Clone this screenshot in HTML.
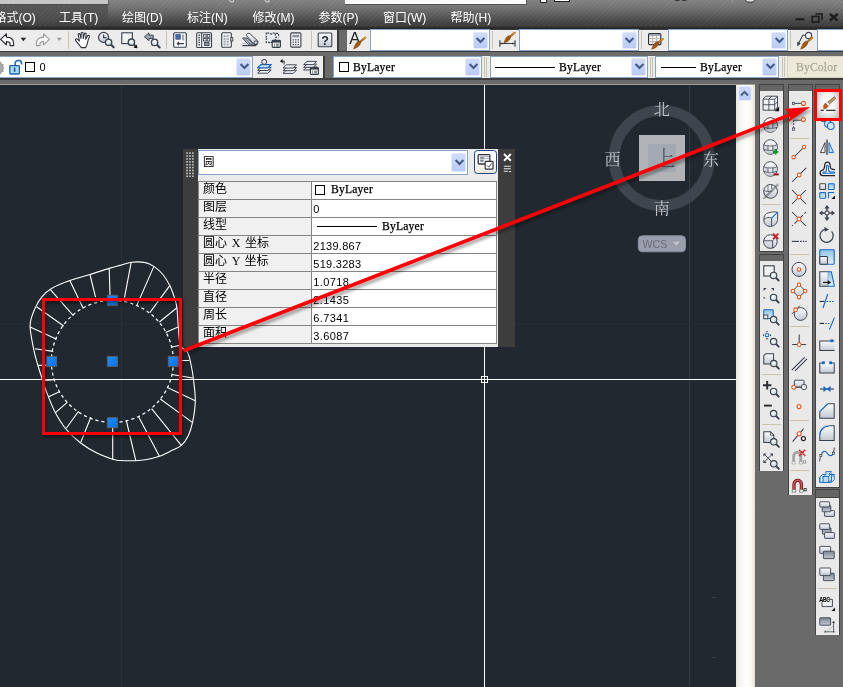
<!DOCTYPE html><html><head><meta charset="utf-8"><title>AutoCAD</title><style>
html,body{margin:0;padding:0}
body{will-change:transform;width:843px;height:687px;overflow:hidden;position:relative;background:#6a6a6a;font-family:"Liberation Sans","Noto Sans CJK SC",sans-serif;font-size:12px}
.a{position:absolute}
svg{overflow:visible}
.menu{color:#fff;font-weight:400;font-size:12px;line-height:14px;top:10.5px;white-space:nowrap;letter-spacing:0}
.tb{background:#ececec}
.combo{background:#fff;border:1px solid #86a4c8;box-sizing:border-box}
.cbtn{background:linear-gradient(#cfdcfb,#b9cbf6);border:1px solid #dfe8fd;box-sizing:border-box;border-radius:2px}
.sep{background:#c9c3a8;width:1px}
.hsep{background:#c9c3a8;height:1px}
.song{font-family:"Liberation Serif","Noto Serif CJK SC",serif;font-size:11.6px;color:#000;white-space:nowrap;line-height:12px}
.song{-webkit-text-stroke:0.25px currentColor;letter-spacing:0.2px}
.mono{font-family:"Liberation Sans","Noto Sans CJK SC",sans-serif;font-size:11px;letter-spacing:-0.12px;color:#000;white-space:nowrap;line-height:12px}
.lab{word-spacing:1.65px}
.lab{font-family:"Liberation Serif","Noto Sans CJK SC",sans-serif;font-size:12px;color:#000;white-space:nowrap;line-height:12px}
.pbody{background:#e9e9e9}
</style></head><body>
<svg class="a" width="0" height="0" style="left:0;top:0"><defs>
<linearGradient id="gf" x1="0" y1="0" x2="0" y2="1"><stop offset="0" stop-color="#fbfcfd"/><stop offset="1" stop-color="#c3c8d2"/></linearGradient>
<linearGradient id="gd" x1="0" y1="0" x2="0" y2="1"><stop offset="0" stop-color="#7d8594"/><stop offset="1" stop-color="#c4c9d2"/></linearGradient>
<linearGradient id="gb" x1="0" y1="0" x2="0" y2="1"><stop offset="0" stop-color="#8fc4e6"/><stop offset="1" stop-color="#e4f1f8"/></linearGradient>
<linearGradient id="gg" x1="0" y1="0" x2="1" y2="1"><stop offset="0" stop-color="#1a8cff"/><stop offset="1" stop-color="#0874ea"/></linearGradient>
<radialGradient id="gl" cx="0.45" cy="0.4" r="0.6"><stop offset="0" stop-color="#ffffff"/><stop offset="1" stop-color="#b9cfd6"/></radialGradient>
<linearGradient id="gbr" x1="0" y1="1" x2="1" y2="0"><stop offset="0" stop-color="#7a3a10"/><stop offset="0.5" stop-color="#c87428"/><stop offset="1" stop-color="#8a4a18"/></linearGradient>
</defs></svg>
<div class="a " style="left:0px;top:0px;width:843px;height:29px;background:linear-gradient(#5a5a5a 0px,#565656 6px,#515151 13px,#494949 20px,#3d3d3d 26px,#2b2b2b 27.3px,#2b2b2b 28.6px,#555 29px)"></div>
<div class="a " style="left:108px;top:0px;width:735px;height:22px;background:linear-gradient(rgba(255,255,255,0.24) 0px,rgba(255,255,255,0.17) 8px,rgba(255,255,255,0.06) 16px,rgba(255,255,255,0) 22px)"></div>
<div class="a " style="left:0px;top:0px;width:843px;height:27px;background:repeating-linear-gradient(135deg,rgba(255,255,255,0) 0px,rgba(255,255,255,0) 2.6px,rgba(255,255,255,0.04) 2.6px,rgba(255,255,255,0.04) 3.6px)"></div>
<div class="a " style="left:0px;top:0px;width:108px;height:3.7px;background:#c6c6c6;border-right:1px solid #666;border-bottom:1.2px solid #4c4c4c"></div>
<div class="a " style="left:345px;top:0px;width:181px;height:3.6px;background:#fafafa;border-right:1px solid #555;border-bottom:1px solid #555"></div>
<div class="a " style="left:540px;top:0px;width:5px;height:1.6px;background:#fff;border:1px solid #222;border-top:0"></div>
<div class="a " style="left:553.5px;top:0px;width:14px;height:1.4px;background:#fff;border:1px solid #222;border-top:0"></div>
<div class="a menu" style="left:-5.5px">格式(O)</div>
<div class="a menu" style="left:59px">工具(T)</div>
<div class="a menu" style="left:122px">绘图(D)</div>
<div class="a menu" style="left:187px">标注(N)</div>
<div class="a menu" style="left:252.5px">修改(M)</div>
<div class="a menu" style="left:318.5px">参数(P)</div>
<div class="a menu" style="left:383px">窗口(W)</div>
<div class="a menu" style="left:450.5px">帮助(H)</div>
<svg class="a" style="left:0;top:0" width="843" height="5" viewBox="0 0 843 5"><path d="M229.5 0c0.4 1.6 2 2.2 4 1.6V0M265 0c0.4 1.6 2 2.2 4 1.6V0" fill="none" stroke="#c8c8c8" stroke-width="1.2"/><path d="M675 0.3h4.5M682 0.3h4.5" stroke="#3a3a3a" stroke-width="1.4"/><path d="M745.5 0a4.5 2.2 0 0 0 9 0" fill="#ddd" stroke="#333" stroke-width="1"/><path d="M732.5 0v3" stroke="#999" stroke-width="1"/></svg>
<svg class="a" style="left:790px;top:8px" width="53" height="20" viewBox="790 8 53 20"><g stroke="#1c1c1c" fill="none"><path d="M795.5 19.3h9" stroke-width="2.2"/><path d="M815.5 14h6.5v6" stroke-width="1.6"/><rect x="812.2" y="16.4" width="6.6" height="5.6" stroke-width="1.6"/><path d="M830 14l7.6 6.6M837.6 14l-7.6 6.6" stroke-width="2.4"/></g></svg>
<div class="a " style="left:0px;top:29px;width:843px;height:56px;background:#3a3a3a"></div>
<div class="a " style="left:0px;top:52.3px;width:843px;height:3.4px;background:#6b6b6b"></div>
<div class="a tb" style="left:0px;top:29.5px;width:336.5px;height:21px;"></div>
<div class="a " style="left:339px;top:29.5px;width:7.5px;height:21px;background:#6a6a6a"></div>
<div class="a tb" style="left:346.5px;top:29.5px;width:496.5px;height:21px;"></div>
<div class="a sep" style="left:68px;top:31px;width:1px;height:18px;"></div>
<div class="a sep" style="left:166px;top:31px;width:1px;height:18px;"></div>
<div class="a sep" style="left:310.5px;top:31px;width:1px;height:18px;"></div>
<div class="a sep" style="left:492px;top:31px;width:1px;height:18px;"></div>
<div class="a sep" style="left:641px;top:31px;width:1px;height:18px;"></div>
<div class="a sep" style="left:790px;top:31px;width:1px;height:18px;"></div>
<svg class="a" style="left:-2.5px;top:32px" width="16" height="16" viewBox="0 0 16 16"><path d="M2.6 7.4L8.4 1.9V5.1C13 5.1 15.6 7.6 15.6 11.4V13.6H12V11.6C12 10.1 10.6 9.6 8.4 9.6V12.8Z" fill="#fff" stroke="#2c2f36" stroke-width="1.2" stroke-linejoin="round"/></svg>
<svg class="a" style="left:33.5px;top:32px" width="16" height="16" viewBox="0 0 16 16"><path d="M15.4 7.4L9.6 1.9V5.1C5 5.1 2.4 7.6 2.4 11.4V13.6H6V11.6C6 10.1 7.4 9.6 9.6 9.6V12.8Z" fill="#f6f6f6" stroke="#9b9b9b" stroke-width="1.1" stroke-linejoin="round"/></svg>
<svg class="a" style="left:75px;top:32px" width="16" height="16" viewBox="0 0 16 16"><path d="M6.4 15.6L0.5 8.3C0 7.1 1.2 6.4 2.2 7.2L4.5 9L3.2 2.7C3 1.3 4.6 0.9 5 2.3L6 6.6L6.2 1.3C6.3 -0.1 8 -0.1 8.1 1.3L8.3 6.6L9.4 1.9C9.8 0.5 11.4 1 11.2 2.4L10.6 7.2L12.6 3.9C13.4 2.7 14.9 3.6 14.3 4.9C13.4 7.1 12.6 9.5 12.4 11.1C12.2 12.9 11.4 14.3 10.6 15.6Z" fill="#fff" stroke="#2c2f36" stroke-width="1.05" stroke-linejoin="round"/></svg>
<svg class="a" style="left:98px;top:32px" width="16" height="16" viewBox="0 0 16 16"><circle cx="5.6" cy="5.4" r="5" fill="url(#gf)" stroke="#3a414e" stroke-width="1.2"/><path d="M5.6 2.4V5.7H8.5" fill="none" stroke="#3a414e" stroke-width="1.2"/><path d="M13.16 12.86l2.50 2.50" stroke="#3a414e" stroke-width="2.1" stroke-linecap="round"/><circle cx="10.6" cy="10.3" r="3.2" fill="url(#gl)" stroke="#3a414e" stroke-width="1.3"/></svg>
<svg class="a" style="left:121px;top:32px" width="16" height="16" viewBox="0 0 16 16"><rect x="0.8" y="0.8" width="10.6" height="10.8" fill="#f3f3f3" stroke="#3a414e" stroke-width="1.1"/><path d="M12.96 12.76l2.50 2.50" stroke="#3a414e" stroke-width="2.1" stroke-linecap="round"/><circle cx="10.4" cy="10.2" r="3.2" fill="url(#gl)" stroke="#3a414e" stroke-width="1.3"/><path d="M16 12.6V16H12.6Z" fill="#111"/></svg>
<svg class="a" style="left:144px;top:32px" width="16" height="16" viewBox="0 0 16 16"><path d="M0.4 4.8L5 0.9V3.2H9.2V6.4H5V8.7Z" fill="#9aa7b8" stroke="#3a414e" stroke-width="1"/><path d="M13.16 12.96l2.50 2.50" stroke="#3a414e" stroke-width="2.1" stroke-linecap="round"/><circle cx="10.6" cy="10.4" r="3.2" fill="url(#gl)" stroke="#3a414e" stroke-width="1.3"/></svg>
<svg class="a" style="left:173px;top:32px" width="16" height="16" viewBox="0 0 16 16"><rect x="0.7" y="0.7" width="12.6" height="14.6" rx="1" fill="#fbfbfb" stroke="#3a414e" stroke-width="1.1"/><rect x="2.8" y="2.6" width="4.6" height="4.6" fill="#3f6db0" stroke="#1d3f78" stroke-width="0.6"/><rect x="9" y="2.4" width="2.2" height="6" fill="#a9adb5"/><path d="M4 11.6h7M4 11.6l2-1.6M4 11.6l2 1.6" stroke="#3a414e" stroke-width="1.1" fill="none"/></svg>
<svg class="a" style="left:196px;top:32px" width="16" height="16" viewBox="0 0 16 16"><rect x="0.7" y="0.7" width="14.8" height="14.8" rx="1" fill="#f5f5f5" stroke="#3a414e" stroke-width="1.1"/><path d="M5.7 0.7V15.5" stroke="#3a414e" stroke-width="1.05"/><rect x="2.4" y="2.6" width="1.6" height="1.3" fill="#3a414e"/><rect x="2.4" y="5" width="1.6" height="1.3" fill="#3a414e"/><rect x="2.4" y="7.4" width="1.6" height="1.3" fill="#3a414e"/><rect x="2.4" y="9.8" width="1.6" height="1.3" fill="#3a414e"/><rect x="2.4" y="12.2" width="1.6" height="1.3" fill="#3a414e"/><rect x="7.6" y="2.6" width="2.6" height="2.6" fill="#fff" stroke="#3a414e" stroke-width="0.9"/><rect x="7.6" y="6.4" width="2.6" height="2.6" fill="#fff" stroke="#3a414e" stroke-width="0.9"/><rect x="11.2" y="2.6" width="2.6" height="2.6" fill="#fff" stroke="#3a414e" stroke-width="0.9"/><rect x="11.2" y="6.4" width="2.6" height="2.6" fill="#fff" stroke="#3a414e" stroke-width="0.9"/><rect x="8.6" y="10.4" width="4.4" height="3.2" fill="#8e96a4" stroke="#3a414e" stroke-width="0.9"/></svg>
<svg class="a" style="left:219px;top:32px" width="16" height="16" viewBox="0 0 16 16"><rect x="2.7" y="0.7" width="9.6" height="14.6" rx="1" fill="#f2f2f2" stroke="#3a414e" stroke-width="1.1"/><rect x="11.8" y="5.6" width="2" height="3.4" fill="#ddd" stroke="#3a414e" stroke-width="0.9"/><rect x="4.6" y="3" width="2" height="2" fill="#a3a7ae"/><rect x="4.6" y="5.8" width="2" height="2" fill="#a3a7ae"/><rect x="4.6" y="8.6" width="2" height="2" fill="#a3a7ae"/><rect x="4.6" y="11.4" width="2" height="2" fill="#a3a7ae"/><rect x="7.6" y="3" width="2" height="2" fill="#a3a7ae"/><rect x="7.6" y="5.8" width="2" height="2" fill="#a3a7ae"/><rect x="7.6" y="8.6" width="2" height="2" fill="#a3a7ae"/><rect x="7.6" y="11.4" width="2" height="2" fill="#a3a7ae"/></svg>
<svg class="a" style="left:242px;top:32px" width="16" height="16" viewBox="0 0 16 16"><path d="M0.4 6H5L11.8 12.2H6Z" fill="#dde1e8" stroke="#3a414e" stroke-width="0.9" stroke-linejoin="round"/><path d="M1.8 6.4L8 12M3.4 6.2L9.6 12" stroke="#3a414e" stroke-width="0.7"/><path d="M4.4 3.4C4.6 1.6 6.6 0.8 7.8 1.6L15.6 8.8C16.4 10.2 16 11.8 14.6 12.2L12 12.4Z" fill="url(#gf)" stroke="#3a414e" stroke-width="1" stroke-linejoin="round"/><circle cx="13.8" cy="10.6" r="1.8" fill="#c9ced8" stroke="#3a414e" stroke-width="0.9"/><path d="M0.4 13.7H13.2L15.4 12.2" fill="none" stroke="#3a414e" stroke-width="1.2"/><path d="M0.6 11.6H5" stroke="#b8bcc4" stroke-width="1.4"/></svg>
<svg class="a" style="left:265px;top:32px" width="16" height="16" viewBox="0 0 16 16"><path d="M2.2 1.2h3l1 0.9 1-0.9h3.2v3l0.9 1-0.9 1v4.2H6.2l-1 0.9-1-0.9H1.2V7.4l0.9-1-0.9-1V1.2Z" fill="#e6e9ee" stroke="#3a414e" stroke-width="1.2" stroke-dasharray="2 1.1"/><path d="M11 1.4h2.6v4" fill="none" stroke="#3a414e" stroke-width="1.1" stroke-dasharray="2 1.1"/><rect x="7.2" y="8.4" width="8.2" height="7" rx="0.8" fill="#f4f4f4" stroke="#3a414e" stroke-width="1.2"/><rect x="7.2" y="8.4" width="8.2" height="2.2" fill="#3a414e"/><path d="M9 12.2h1M11 12.2h3M9 14h1M11 14h3" stroke="#3a414e" stroke-width="0.9"/></svg>
<svg class="a" style="left:288px;top:32px" width="16" height="16" viewBox="0 0 16 16"><rect x="2.7" y="0.9" width="10.2" height="14.2" rx="1.2" fill="#f7f7f7" stroke="#3a414e" stroke-width="1.1"/><rect x="4.4" y="2.8" width="6.8" height="2.6" fill="#8d95a3"/><rect x="4.6" y="7.2" width="1.3" height="1.3" fill="#3a414e"/><rect x="4.6" y="9.6" width="1.3" height="1.3" fill="#3a414e"/><rect x="4.6" y="12" width="1.3" height="1.3" fill="#3a414e"/><rect x="7.1" y="7.2" width="1.3" height="1.3" fill="#3a414e"/><rect x="7.1" y="9.6" width="1.3" height="1.3" fill="#3a414e"/><rect x="7.1" y="12" width="1.3" height="1.3" fill="#3a414e"/><rect x="9.6" y="7.2" width="1.3" height="1.3" fill="#3a414e"/><rect x="9.6" y="9.6" width="1.3" height="1.3" fill="#3a414e"/><rect x="9.6" y="12" width="1.3" height="1.3" fill="#3a414e"/></svg>
<svg class="a" style="left:317px;top:32px" width="16" height="16" viewBox="0 0 16 16"><rect x="1.2" y="1" width="13.6" height="13.8" rx="1" fill="url(#gf)" stroke="#3a414e" stroke-width="1.1"/><text x="8" y="12.6" text-anchor="middle" font-family="Liberation Sans,sans-serif" font-weight="bold" font-size="12.5" fill="#1e2430">?</text></svg>
<svg class="a" style="left:20px;top:37px" width="45" height="6" viewBox="20 37 45 6"><path d="M20.6 37.8h5.6l-2.8 3.4z" fill="#222"/><path d="M56.6 37.8h5.4l-2.7 3.3z" fill="#a0a0a0"/></svg>
<svg class="a" style="left:350px;top:32px" width="16" height="16" viewBox="0 0 16 16"><text x="-0.7" y="12.1" font-family="Liberation Sans,sans-serif" font-size="16.6" fill="#22262e">A</text><path d="M10.20 9.68 L15.38 5.50" stroke="#7a3c08" stroke-width="1.9" stroke-linecap="round" stroke-dasharray="1.1 0.5"/><path d="M10.20 9.68 L14.75 6.00" stroke="#f6c060" stroke-width="0.7"/><path d="M14.13 6.51 L15.38 5.50" stroke="#f4a010" stroke-width="1.3" stroke-linecap="round"/><path d="M3.57 16.94 C6.28 16.18 11.04 13.63 10.71 9.52 C7.93 7.66 5.32 11.55 3.57 16.94 Z" fill="#a2570f" stroke="#7c3f0a" stroke-width="0.5"/></svg>
<div class="a combo" style="left:370px;top:29px;width:119.5px;height:22px;"></div><div class="a cbtn" style="left:472.5px;top:31.5px;width:15px;height:17px;"><svg class="a" style="left:2.5px;top:4px" width="9" height="7" viewBox="0 0 9 7"><path d="M0.6 1.1l3.9 4 3.9-4" fill="none" stroke="#425a8c" stroke-width="2.1"/></svg></div>
<svg class="a" style="left:498.5px;top:32px" width="16" height="16" viewBox="0 0 16 16"><path d="M0.9 8.2V14.8M16 8.2V14.8M0.9 11.5H16" stroke="#3a414e" stroke-width="1.2" fill="none"/><path d="M1.2 11.5l2.2-1.3v2.6zM15.7 11.5l-2.2-1.3v2.6z" fill="#3a414e"/><path d="M11.05 4.43 L15.87 0.69" stroke="#7a3c08" stroke-width="1.9" stroke-linecap="round" stroke-dasharray="1.1 0.5"/><path d="M11.05 4.43 L15.24 1.18" stroke="#f6c060" stroke-width="0.7"/><path d="M14.60 1.67 L15.87 0.69" stroke="#f4a010" stroke-width="1.3" stroke-linecap="round"/><path d="M4.85 11.15 C7.45 10.53 11.93 8.31 11.54 4.31 C8.85 2.34 6.44 5.99 4.85 11.15 Z" fill="#a2570f" stroke="#7c3f0a" stroke-width="0.5"/></svg>
<div class="a combo" style="left:518.5px;top:29px;width:120px;height:22px;"></div><div class="a cbtn" style="left:621.5px;top:31.5px;width:15px;height:17px;"><svg class="a" style="left:2.5px;top:4px" width="9" height="7" viewBox="0 0 9 7"><path d="M0.6 1.1l3.9 4 3.9-4" fill="none" stroke="#425a8c" stroke-width="2.1"/></svg></div>
<svg class="a" style="left:648px;top:32px" width="16" height="16" viewBox="0 0 16 16"><rect x="0.6" y="1.7" width="12.2" height="11" rx="1" fill="#fbfbfb" stroke="#2e323a" stroke-width="1.2"/><rect x="1.2" y="2.3" width="11" height="1.5" fill="#8d95ab"/><path d="M1.2 6.6h11M1.2 9.6h11M4.6 4v8.4M8.6 4v8.4" stroke="#b4b4b4" stroke-width="1"/><path d="M10.12 10.54 L15.06 6.88" stroke="#7a3c08" stroke-width="1.9" stroke-linecap="round" stroke-dasharray="1.1 0.5"/><path d="M10.12 10.54 L14.42 7.35" stroke="#f6c060" stroke-width="0.7"/><path d="M13.77 7.83 L15.06 6.88" stroke="#f4a010" stroke-width="1.3" stroke-linecap="round"/><path d="M3.71 17.16 C6.34 16.58 10.90 14.44 10.61 10.42 C7.96 8.41 5.45 12.02 3.71 17.16 Z" fill="#a2570f" stroke="#7c3f0a" stroke-width="0.5"/></svg>
<div class="a combo" style="left:668px;top:29px;width:120px;height:22px;"></div><div class="a cbtn" style="left:771px;top:31.5px;width:15px;height:17px;"><svg class="a" style="left:2.5px;top:4px" width="9" height="7" viewBox="0 0 9 7"><path d="M0.6 1.1l3.9 4 3.9-4" fill="none" stroke="#425a8c" stroke-width="2.1"/></svg></div>
<svg class="a" style="left:797px;top:32px" width="16" height="16" viewBox="0 0 16 16"><circle cx="11.5" cy="3.5" r="3.1" fill="#f3f4f8" stroke="#3a414e" stroke-width="1.1"/><path d="M8.4 3.3H5.7L1.6 11.6" fill="none" stroke="#3a414e" stroke-width="1.1"/><path d="M0.2 14.6l0.1-5 3.4 1.8z" fill="#3a414e"/><path d="M10.24 9.88 L15.38 5.70" stroke="#7a3c08" stroke-width="1.9" stroke-linecap="round" stroke-dasharray="1.1 0.5"/><path d="M10.24 9.88 L14.76 6.21" stroke="#f6c060" stroke-width="0.7"/><path d="M14.14 6.71 L15.38 5.70" stroke="#f4a010" stroke-width="1.3" stroke-linecap="round"/><path d="M3.68 17.14 C6.38 16.37 11.10 13.82 10.75 9.72 C7.96 7.86 5.39 11.76 3.68 17.14 Z" fill="#a2570f" stroke="#7c3f0a" stroke-width="0.5"/></svg>
<div class="a combo" style="left:817px;top:29px;width:40px;height:22px;"></div>
<div class="a tb" style="left:0px;top:55.5px;width:322.5px;height:22.5px;"></div>
<div class="a " style="left:325px;top:55.5px;width:7.5px;height:22.5px;background:#6a6a6a"></div>
<div class="a tb" style="left:332.5px;top:55.5px;width:510.5px;height:22.5px;"></div>
<div class="a combo" style="left:-6px;top:55.5px;width:259px;height:22.5px;"><svg class="a" style="left:3px;top:3px" width="16" height="16" viewBox="0 0 16 16"><path transform="translate(1.2,0)" d="M-2 1.4l1.6 1.4 1.8-1 0.6 2.2 2.2 0.4-0.6 2 1.4 1.6-1.4 1.4 0.6 2-2.2 0.6-0.6 2-1.8-0.8-1.6 1.4Z" fill="#a8a8a8" stroke="#8c8c8c" stroke-width="0.6"/></svg><svg class="a" style="left:14px;top:2px" width="16" height="16" viewBox="0 0 16 16"><path d="M6.2 7V4.2C6.2 0.6 12.4 0.4 12.6 4.2V5.4" fill="none" stroke="#2a6bb8" stroke-width="1.6"/><rect x="0.8" y="6.6" width="9.6" height="8.4" rx="0.8" fill="#a8dcf4" stroke="#1f62b0" stroke-width="1.3"/><path d="M5.6 8.6v4.2" stroke="#1f4f9a" stroke-width="1.6"/></svg><div class="a" style="left:29.8px;top:5.4px;width:8px;height:8px;border:1px solid #000;background:#fff"></div><div class="a mono" style="left:44.6px;top:4px">0</div></div><div class="a cbtn" style="left:236px;top:58px;width:15px;height:17.5px;"><svg class="a" style="left:2.5px;top:4.25px" width="9" height="7" viewBox="0 0 9 7"><path d="M0.6 1.1l3.9 4 3.9-4" fill="none" stroke="#425a8c" stroke-width="2.1"/></svg></div>
<svg class="a" style="left:257px;top:59px" width="16" height="16" viewBox="0 0 16 16"><path d="M0.6 14.2l3.4-3.2h10.2l-3.4 3.2z" fill="#f0f2f6" stroke="#3a414e" stroke-width="0.95" stroke-linejoin="round"/><path d="M0.6 11.5l3.4-3.2h10.2l-3.4 3.2z" fill="#f0f2f6" stroke="#3a414e" stroke-width="0.95" stroke-linejoin="round"/><path d="M0.6 8.8l3.4-3.2h10.2l-3.4 3.2z" fill="#f0f2f6" stroke="#3a414e" stroke-width="0.95" stroke-linejoin="round"/><path d="M0.6 8.8l3.4-3.2h10.2l-3.4 3.2z" fill="#cfe6f8" stroke="#1268c8" stroke-width="1.1" stroke-linejoin="round"/><circle cx="7.2" cy="2.9" r="2.5" fill="#e8eaee" stroke="#3a414e" stroke-width="1"/></svg>
<svg class="a" style="left:280px;top:59px" width="16" height="16" viewBox="0 0 16 16"><path d="M3 14.4l3.4-3.2h10.2l-3.4 3.2z" fill="#f0f2f6" stroke="#3a414e" stroke-width="0.95" stroke-linejoin="round"/><path d="M3 11.7l3.4-3.2h10.2l-3.4 3.2z" fill="#f0f2f6" stroke="#3a414e" stroke-width="0.95" stroke-linejoin="round"/><path d="M3 9l3.4-3.2h10.2l-3.4 3.2z" fill="#f0f2f6" stroke="#3a414e" stroke-width="0.95" stroke-linejoin="round"/><path d="M1 2.2h3.2v3.2" fill="none" stroke="#3a414e" stroke-width="1.1"/><path d="M0 2.2l2.6-2.1v4.2z" fill="#111"/></svg>
<svg class="a" style="left:303px;top:59px" width="16" height="16" viewBox="0 0 16 16"><path d="M0.6 11l3.4-3.2h9.6l-3.4 3.2z" fill="#f0f2f6" stroke="#3a414e" stroke-width="0.95" stroke-linejoin="round"/><path d="M0.6 8.3l3.4-3.2h9.6l-3.4 3.2z" fill="#f0f2f6" stroke="#3a414e" stroke-width="0.95" stroke-linejoin="round"/><path d="M0.6 5.6l3.4-3.2h9.6l-3.4 3.2z" fill="#f0f2f6" stroke="#3a414e" stroke-width="0.95" stroke-linejoin="round"/><rect x="7.4" y="8.6" width="8" height="6.8" rx="0.8" fill="#f4f4f4" stroke="#3a414e" stroke-width="1.2"/><rect x="7.4" y="8.6" width="8" height="2" fill="#3a414e"/><path d="M9 12.2h1M11 12.2h3M9 13.8h1M11 13.8h3" stroke="#3a414e" stroke-width="0.8"/></svg>
<div class="a combo" style="left:332.5px;top:55.5px;width:149.5px;height:22.5px;"><div class="a" style="left:5.5px;top:5.6px;width:8px;height:8px;border:1px solid #000;background:#fff"></div><div class="a song" style="left:19.5px;top:5.2px">ByLayer</div></div><div class="a cbtn" style="left:465px;top:58px;width:15px;height:17.5px;"><svg class="a" style="left:2.5px;top:4.25px" width="9" height="7" viewBox="0 0 9 7"><path d="M0.6 1.1l3.9 4 3.9-4" fill="none" stroke="#425a8c" stroke-width="2.1"/></svg></div>
<div class="a sep" style="left:484px;top:57px;width:1px;height:20px;"></div><div class="a sep" style="left:486px;top:57px;width:1px;height:20px;"></div>
<div class="a combo" style="left:489.5px;top:55.5px;width:158.5px;height:22.5px;"><div class="a" style="left:4px;top:10.5px;width:60px;height:1px;background:#000"></div><div class="a song" style="left:68.5px;top:5.2px">ByLayer</div></div><div class="a cbtn" style="left:631px;top:58px;width:15px;height:17.5px;"><svg class="a" style="left:2.5px;top:4.25px" width="9" height="7" viewBox="0 0 9 7"><path d="M0.6 1.1l3.9 4 3.9-4" fill="none" stroke="#425a8c" stroke-width="2.1"/></svg></div>
<div class="a sep" style="left:649.5px;top:57px;width:1px;height:20px;"></div><div class="a sep" style="left:651.5px;top:57px;width:1px;height:20px;"></div>
<div class="a combo" style="left:654.5px;top:55.5px;width:124.5px;height:22.5px;"><div class="a" style="left:5px;top:10.5px;width:35px;height:1px;background:#000"></div><div class="a song" style="left:44.5px;top:5.2px">ByLayer</div></div><div class="a cbtn" style="left:762px;top:58px;width:15px;height:17.5px;"><svg class="a" style="left:2.5px;top:4.25px" width="9" height="7" viewBox="0 0 9 7"><path d="M0.6 1.1l3.9 4 3.9-4" fill="none" stroke="#425a8c" stroke-width="2.1"/></svg></div>
<div class="a sep" style="left:781.5px;top:57px;width:1px;height:20px;"></div><div class="a sep" style="left:783.5px;top:57px;width:1px;height:20px;"></div>
<div class="a " style="left:787px;top:55.5px;width:60px;height:22.5px;background:#ece9d8;border:1px solid #d8d4c0;box-sizing:border-box"><div class="a song" style="left:8px;top:5.2px;color:#aca899">ByColor</div></div>
<div class="a " style="left:0px;top:78px;width:843px;height:2.4px;background:#3e3e3e"></div>
<div class="a " style="left:0px;top:80.4px;width:843px;height:4.6px;background:#6b6b6b"></div>
<div class="a " style="left:0px;top:84px;width:755px;height:1px;background:#a39f93"></div>
<div class="a " style="left:0px;top:85px;width:735.5px;height:603px;background:#212830"></div>
<div class="a " style="left:121px;top:84.7px;width:1px;height:603px;background:#29303b"></div>
<div class="a " style="left:689px;top:84.7px;width:1px;height:603px;background:#333a48"></div>
<div class="a " style="left:0px;top:323px;width:735.5px;height:1px;background:#262d37"></div>
<div class="a " style="left:0px;top:379px;width:735.5px;height:1px;background:#fdfdfd"></div>
<div class="a " style="left:484px;top:84.7px;width:1px;height:603px;background:#fdfdfd"></div>
<div class="a " style="left:481px;top:376px;width:7px;height:7px;border:1px solid #fff;box-sizing:border-box;background:#212830"></div>
<div class="a " style="left:484px;top:376px;width:1px;height:7px;background:#fff"></div><div class="a " style="left:481px;top:379px;width:7px;height:1px;background:#fff"></div>
<div class="a " style="left:712px;top:597px;width:4px;height:1px;background:#3d444e"></div><div class="a " style="left:712px;top:657px;width:4px;height:1px;background:#3d444e"></div>
<div class="a " style="left:735.5px;top:84.7px;width:19.5px;height:603px;background:linear-gradient(90deg,#e9e6df 0%,#f6f5f0 22%,#fefefc 55%,#f7f6f0 80%,#efede4 90%,#e2dfd2 96%,#e9e7dc 100%)"></div>
<div class="a " style="left:737.5px;top:85.5px;width:14px;height:15.5px;background:linear-gradient(#cdd9fb,#bccdf7);border:1px solid #e6ecfd;border-radius:2.5px;box-sizing:border-box"><svg class="a" style="left:1.5px;top:3px" width="9" height="7" viewBox="0 0 9 7"><path d="M1 5.5l3.5-3.6L8 5.5" fill="none" stroke="#4d6185" stroke-width="2"/></svg></div>
<div class="a " style="left:758.9px;top:83.6px;width:25px;height:168.1px;background:#434343"></div><div class="a " style="left:759.8px;top:84.5px;width:23.2px;height:6.6px;background:#656565"></div><div class="a pbody" style="left:759.8px;top:91.1px;width:23.2px;height:159.7px;"></div>
<div class="a " style="left:758.9px;top:253.7px;width:25px;height:217.8px;background:#434343"></div><div class="a " style="left:759.8px;top:254.6px;width:23.2px;height:6.4px;background:#656565"></div><div class="a pbody" style="left:759.8px;top:261px;width:23.2px;height:209.6px;"></div>
<div class="a " style="left:787.6px;top:83.6px;width:25px;height:411.9px;background:#434343"></div><div class="a " style="left:788.5px;top:84.5px;width:23.2px;height:6.6px;background:#656565"></div><div class="a pbody" style="left:788.5px;top:91.1px;width:23.2px;height:403.5px;"></div>
<div class="a " style="left:815.1px;top:83.6px;width:25px;height:404px;background:#434343"></div><div class="a " style="left:816px;top:84.5px;width:23.2px;height:6.6px;background:#656565"></div><div class="a pbody" style="left:816px;top:91.1px;width:23.2px;height:395.6px;"></div>
<div class="a " style="left:815.1px;top:489.3px;width:25px;height:146.2px;background:#434343"></div><div class="a " style="left:816px;top:490.2px;width:23.2px;height:7.3px;background:#656565"></div><div class="a pbody" style="left:816px;top:497.5px;width:23.2px;height:137.1px;"></div>
<svg class="a" style="left:762.5px;top:95px" width="16" height="16" viewBox="0 0 16 16"><g transform="translate(-0.7,0)"><path d="M0.8 4.2L3.6 1.2H15.2V12L12.4 15.2H0.8Z" fill="#eef1f6" stroke="#3a414e" stroke-width="0.95" stroke-linejoin="round"/><path d="M0.8 4.2H12.4V15.2M12.4 4.2L15.2 1.2M6.6 4.2V15.2M0.8 9.7H12.4M9.4 1.2L6.6 4.2M12.4 9.7L15.2 6.6" fill="none" stroke="#3a414e" stroke-width="0.86"/><path d="M16.8 11.6V16.2H12.2Z" fill="#111"/></g></svg>
<svg class="a" style="left:762.5px;top:117px" width="16" height="16" viewBox="0 0 16 16"><ellipse cx="7.4" cy="8" rx="7" ry="7.3" fill="url(#gf)" stroke="#3a414e" stroke-width="0.95"/><path d="M0.7 5.8C3.4 7.4 11.4 7.4 14.1 5.8V10.2C11.4 11.8 3.4 11.8 0.7 10.2Z" fill="#d2d7df"/><path d="M5 6.9H9.8V11.3H5Z" fill="#e9ecf1"/><path d="M0.6 5.8C3.4 7.4 11.4 7.4 14.2 5.8M0.6 10.2C3.4 11.8 11.4 11.8 14.2 10.2M5 6.9V11.3M9.8 6.9V11.3" fill="none" stroke="#3a414e" stroke-width="0.73"/><path d="M4.6 3.2L7.4 1.4L10.2 3.2Z" fill="#ffffff"/><path d="M2 12.2C4.6 15 10.2 15 12.8 12.2" fill="none" stroke="#c2c7d0" stroke-width="1.03"/></svg>
<svg class="a" style="left:762.5px;top:139px" width="16" height="16" viewBox="0 0 16 16"><ellipse cx="7.4" cy="8" rx="7" ry="7.3" fill="url(#gf)" stroke="#3a414e" stroke-width="0.95"/><path d="M0.7 5.8C3.4 7.4 11.4 7.4 14.1 5.8V10.2C11.4 11.8 3.4 11.8 0.7 10.2Z" fill="#d2d7df"/><path d="M5 6.9H9.8V11.3H5Z" fill="#e9ecf1"/><path d="M0.6 5.8C3.4 7.4 11.4 7.4 14.2 5.8M0.6 10.2C3.4 11.8 11.4 11.8 14.2 10.2M5 6.9V11.3M9.8 6.9V11.3" fill="none" stroke="#3a414e" stroke-width="0.73"/><path d="M4.6 3.2L7.4 1.4L10.2 3.2Z" fill="#ffffff"/><path d="M2 12.2C4.6 15 10.2 15 12.8 12.2" fill="none" stroke="#c2c7d0" stroke-width="1.03"/><path d="M12.6 10.4V15.6M10 13H15.2" stroke="#0a9a12" stroke-width="1.93"/></svg>
<svg class="a" style="left:762.5px;top:161px" width="16" height="16" viewBox="0 0 16 16"><ellipse cx="7.4" cy="8" rx="7" ry="7.3" fill="url(#gf)" stroke="#3a414e" stroke-width="0.95"/><path d="M0.7 5.8C3.4 7.4 11.4 7.4 14.1 5.8V10.2C11.4 11.8 3.4 11.8 0.7 10.2Z" fill="#d2d7df"/><path d="M5 6.9H9.8V11.3H5Z" fill="#e9ecf1"/><path d="M0.6 5.8C3.4 7.4 11.4 7.4 14.2 5.8M0.6 10.2C3.4 11.8 11.4 11.8 14.2 10.2M5 6.9V11.3M9.8 6.9V11.3" fill="none" stroke="#3a414e" stroke-width="0.73"/><path d="M4.6 3.2L7.4 1.4L10.2 3.2Z" fill="#ffffff"/><path d="M2 12.2C4.6 15 10.2 15 12.8 12.2" fill="none" stroke="#c2c7d0" stroke-width="1.03"/><path d="M10.6 13.4H15.8" stroke="#a00d12" stroke-width="2.02"/></svg>
<svg class="a" style="left:762.5px;top:183px" width="16" height="16" viewBox="0 0 16 16"><circle cx="7.6" cy="8.4" r="6.9" fill="url(#gf)" stroke="#3a414e" stroke-width="0.95"/><path d="M0.8 7.4C3 8.8 7 8.8 9 8M5 2.6V8.4M8.6 1.8V6" fill="none" stroke="#3a414e" stroke-width="0.69"/><path d="M0.2 15.4L14.8 0.8M1.6 15.8L15.6 1.8" stroke="#3a414e" stroke-width="0.77"/></svg>
<div class="a hsep" style="left:762px;top:203.5px;width:18.5px;height:1px;"></div>
<svg class="a" style="left:762.5px;top:211px" width="16" height="16" viewBox="0 0 16 16"><path d="M3.4 2.6C7 0.8 12 0.6 14.6 1.2V8.4C14.4 12 12 15 7.6 15.4C3.4 15.6 0.8 12.6 0.8 9C0.8 6 1.8 3.8 3.4 2.6Z" fill="url(#gf)" stroke="#3a414e" stroke-width="0.95"/><path d="M0.9 8.6C3 6.2 6.4 6 8.6 7.2V15.2" fill="none" stroke="#3a414e" stroke-width="0.86"/><path d="M8.6 7.2L14.4 1.4" stroke="#1268c8" stroke-width="1.12"/></svg>
<svg class="a" style="left:762.5px;top:233px" width="16" height="16" viewBox="0 0 16 16"><circle cx="7.4" cy="8.6" r="6.8" fill="url(#gf)" stroke="#3a414e" stroke-width="0.95"/><path d="M0.7 7.8H9.6M9.6 7.8V15M9.6 7.8L12.4 5" fill="none" stroke="#3a414e" stroke-width="0.86"/><path d="M10 0.6L15.4 6M15.4 0.6L10 6" stroke="#d8161c" stroke-width="1.75"/></svg>
<svg class="a" style="left:762.5px;top:265px" width="16" height="16" viewBox="0 0 16 16"><rect x="0.8" y="0.8" width="10.4" height="10.2" fill="#f3f3f3" stroke="#3a414e" stroke-width="1.12"/><path d="M13.16 12.96l2.50 2.50" stroke="#3a414e" stroke-width="1.93" stroke-linecap="round"/><circle cx="10.6" cy="10.4" r="3.2" fill="url(#gl)" stroke="#3a414e" stroke-width="1.12"/></svg>
<svg class="a" style="left:762.5px;top:287px" width="16" height="16" viewBox="0 0 16 16"><path d="M0.6 1H3.6L0.6 4ZM8 1H11L11 4ZM0.6 9.4L2.6 11.4H0.6Z" fill="#3a414e"/><path d="M13.16 12.96l2.50 2.50" stroke="#3a414e" stroke-width="1.93" stroke-linecap="round"/><circle cx="10.6" cy="10.4" r="3.2" fill="url(#gl)" stroke="#3a414e" stroke-width="1.12"/></svg>
<svg class="a" style="left:762.5px;top:309px" width="16" height="16" viewBox="0 0 16 16"><rect x="0.8" y="0.8" width="9.4" height="8.8" rx="0.6" fill="url(#gb)" stroke="#1268c8" stroke-width="1.03"/><rect x="0.8" y="6" width="4" height="3.8" fill="#f4f4f4" stroke="#3a414e" stroke-width="0.95"/><path d="M13.16 13.16l2.50 2.50" stroke="#3a414e" stroke-width="1.93" stroke-linecap="round"/><circle cx="10.6" cy="10.6" r="3.2" fill="url(#gl)" stroke="#3a414e" stroke-width="1.12"/></svg>
<svg class="a" style="left:762.5px;top:331px" width="16" height="16" viewBox="0 0 16 16"><rect x="2.6" y="2.8" width="2.8" height="2.8" fill="#fff" stroke="#1268c8" stroke-width="0.95"/><path d="M2.6 0.2H5.4L4 1.6ZM2.6 8.2H5.4L4 6.8ZM0 2.8V5.6L1.4 4.2ZM8 2.8V5.6L6.6 4.2Z" fill="#3a414e"/><path d="M13.16 13.16l2.50 2.50" stroke="#3a414e" stroke-width="1.93" stroke-linecap="round"/><circle cx="10.6" cy="10.6" r="3.2" fill="url(#gl)" stroke="#3a414e" stroke-width="1.12"/></svg>
<svg class="a" style="left:762.5px;top:353px" width="16" height="16" viewBox="0 0 16 16"><path d="M2.6 0.8H10.6V11H0.8V2.6Z" fill="url(#gf)" stroke="#3a414e" stroke-width="1.03" stroke-linejoin="round"/><path d="M13.36 13.16l2.50 2.50" stroke="#3a414e" stroke-width="1.93" stroke-linecap="round"/><circle cx="10.8" cy="10.6" r="3.2" fill="url(#gl)" stroke="#3a414e" stroke-width="1.12"/></svg>
<div class="a hsep" style="left:762px;top:374px;width:18.5px;height:1px;"></div>
<svg class="a" style="left:762.5px;top:381px" width="16" height="16" viewBox="0 0 16 16"><path d="M4.2 0V8.4M0 4.2H8.4" stroke="#2a2d34" stroke-width="1.93"/><path d="M13.16 12.96l2.50 2.50" stroke="#3a414e" stroke-width="1.93" stroke-linecap="round"/><circle cx="10.6" cy="10.4" r="3.2" fill="url(#gl)" stroke="#3a414e" stroke-width="1.12"/></svg>
<svg class="a" style="left:762.5px;top:403px" width="16" height="16" viewBox="0 0 16 16"><path d="M1 2.6H8.8" stroke="#2a2d34" stroke-width="1.93"/><path d="M13.16 13.16l2.50 2.50" stroke="#3a414e" stroke-width="1.93" stroke-linecap="round"/><circle cx="10.6" cy="10.6" r="3.2" fill="url(#gl)" stroke="#3a414e" stroke-width="1.12"/></svg>
<div class="a hsep" style="left:762px;top:424px;width:18.5px;height:1px;"></div>
<svg class="a" style="left:762.5px;top:431px" width="16" height="16" viewBox="0 0 16 16"><path d="M0.8 0.8H7.6L10.8 4V11.4H0.8Z" fill="url(#gf)" stroke="#3a414e" stroke-width="1.03" stroke-linejoin="round"/><path d="M7.4 0.8V4.2H10.8" fill="none" stroke="#3a414e" stroke-width="0.77"/><path d="M13.36 13.36l2.50 2.50" stroke="#3a414e" stroke-width="1.93" stroke-linecap="round"/><circle cx="10.8" cy="10.8" r="3.2" fill="url(#gl)" stroke="#3a414e" stroke-width="1.12"/></svg>
<svg class="a" style="left:762.5px;top:453px" width="16" height="16" viewBox="0 0 16 16"><path d="M1 1L9.4 9.4M9.4 1L1 9.4" stroke="#3a414e" stroke-width="0.95"/><path d="M0.4 0.4H3.6L0.4 3.6ZM10 0.4H6.8L10 3.6ZM0.4 10H3.6L0.4 6.8Z" fill="#3a414e"/><path d="M13.36 13.36l2.50 2.50" stroke="#3a414e" stroke-width="1.93" stroke-linecap="round"/><circle cx="10.8" cy="10.8" r="3.2" fill="url(#gl)" stroke="#3a414e" stroke-width="1.12"/></svg>
<svg class="a" style="left:790.5px;top:95px" width="16" height="16" viewBox="0 0 16 16"><path d="M3.4 8.4H11" stroke="#3a414e" stroke-width="0.95"/><rect x="1.4" y="7.3" width="2.2" height="2.2" fill="#fff" stroke="#3a414e" stroke-width="0.77"/><circle cx="12.4" cy="8.4" r="2" fill="#fff" stroke="#e2571a" stroke-width="1.07"/></svg>
<svg class="a" style="left:790.5px;top:117px" width="16" height="16" viewBox="0 0 16 16"><path d="M3.2 3.2H10.6" stroke="#3a414e" stroke-width="0.95"/><path d="M2.6 3.2V11" stroke="#3a414e" stroke-width="0.95" stroke-dasharray="1.8 1.3"/><rect x="1.5" y="11" width="2.2" height="2.2" fill="#fff" stroke="#3a414e" stroke-width="0.77"/><circle cx="12.4" cy="2.6" r="2" fill="#fff" stroke="#e2571a" stroke-width="1.07"/></svg>
<div class="a hsep" style="left:790px;top:137.5px;width:18.5px;height:1px;"></div>
<svg class="a" style="left:790.5px;top:144px" width="16" height="16" viewBox="0 0 16 16"><path d="M3 13L12 4" stroke="#3a414e" stroke-width="1.03"/><circle cx="13" cy="3" r="1.7" fill="#fff" stroke="#e2571a" stroke-width="1.07"/><circle cx="2.6" cy="13.2" r="1.7" fill="#fff" stroke="#e2571a" stroke-width="1.07"/></svg>
<svg class="a" style="left:790.5px;top:167px" width="16" height="16" viewBox="0 0 16 16"><path d="M1 15L15.2 0.8" stroke="#3a414e" stroke-width="1.03"/><circle cx="8.2" cy="8" r="1.9" fill="#fff" stroke="#e2571a" stroke-width="1.07"/></svg>
<svg class="a" style="left:790.5px;top:189px" width="16" height="16" viewBox="0 0 16 16"><path d="M1 1L15 15M15 1L1 15" stroke="#3a414e" stroke-width="1.03"/><circle cx="8" cy="8" r="1.9" fill="#fff" stroke="#e2571a" stroke-width="1.07"/></svg>
<svg class="a" style="left:790.5px;top:211px" width="16" height="16" viewBox="0 0 16 16"><path d="M1 1L15 15" stroke="#3a414e" stroke-width="1.03"/><path d="M15 1L1 15" stroke="#3a414e" stroke-width="1.03" stroke-dasharray="2.2 2.2 12 2.2"/><circle cx="8" cy="8" r="1.9" fill="#fff" stroke="#e2571a" stroke-width="1.07"/></svg>
<svg class="a" style="left:790.5px;top:233px" width="16" height="16" viewBox="0 0 16 16"><path d="M0.8 8.4H8" stroke="#3a414e" stroke-width="1.12"/><path d="M9 8.4H15.6" stroke="#3a414e" stroke-width="1.12" stroke-dasharray="1.6 1.1"/></svg>
<div class="a hsep" style="left:790px;top:254px;width:18.5px;height:1px;"></div>
<svg class="a" style="left:790.5px;top:261px" width="16" height="16" viewBox="0 0 16 16"><circle cx="8" cy="8.4" r="7" fill="url(#gf)" stroke="#3a414e" stroke-width="0.95"/><circle cx="8" cy="8.4" r="1.7" fill="#fff" stroke="#e2571a" stroke-width="1.07"/></svg>
<svg class="a" style="left:790.5px;top:283px" width="16" height="16" viewBox="0 0 16 16"><path d="M8 1.6L14.4 8L8 14.4L1.6 8Z" fill="url(#gf)" stroke="#3a414e" stroke-width="0.95"/><circle cx="8" cy="1.8" r="1.7" fill="#fff" stroke="#e2571a" stroke-width="1.07"/><circle cx="14.2" cy="8" r="1.7" fill="#fff" stroke="#e2571a" stroke-width="1.07"/><circle cx="8" cy="14.2" r="1.7" fill="#fff" stroke="#e2571a" stroke-width="1.07"/><circle cx="1.8" cy="8" r="1.7" fill="#fff" stroke="#e2571a" stroke-width="1.07"/></svg>
<svg class="a" style="left:790.5px;top:305px" width="16" height="16" viewBox="0 0 16 16"><circle cx="9.6" cy="9" r="6.4" fill="url(#gf)" stroke="#3a414e" stroke-width="0.95"/><path d="M0.8 9L9 0.6" stroke="#3a414e" stroke-width="0.95"/><circle cx="4.6" cy="4.8" r="1.9" fill="#fff" stroke="#e2571a" stroke-width="1.07"/></svg>
<div class="a hsep" style="left:790px;top:326px;width:18.5px;height:1px;"></div>
<svg class="a" style="left:790.5px;top:333px" width="16" height="16" viewBox="0 0 16 16"><path d="M8.2 1.4V11.6M1.2 11.6H15" stroke="#3a414e" stroke-width="1.03"/><circle cx="8.2" cy="11.6" r="1.9" fill="#fff" stroke="#e2571a" stroke-width="1.07"/></svg>
<svg class="a" style="left:790.5px;top:355px" width="16" height="16" viewBox="0 0 16 16"><path d="M0.8 15.2L13.6 2.4M4 15.8L16 3.8" stroke="#3a414e" stroke-width="1.12"/></svg>
<svg class="a" style="left:790.5px;top:377px" width="16" height="16" viewBox="0 0 16 16"><rect x="3.4" y="3.2" width="9.6" height="7" rx="0.6" fill="url(#gf)" stroke="#3a414e" stroke-width="0.95"/><path d="M3.6 10.2H12" stroke="#3a414e" stroke-width="0.86"/><circle cx="13" cy="10" r="2.7" fill="#f3f3f3" stroke="#3a414e" stroke-width="0.86"/><path d="M13 10L14.6 8.6" stroke="#888" stroke-width="0.60"/><circle cx="2.8" cy="10.2" r="2" fill="#fff" stroke="#e2571a" stroke-width="1.07"/></svg>
<svg class="a" style="left:790.5px;top:399px" width="16" height="16" viewBox="0 0 16 16"><circle cx="8" cy="7.6" r="2" fill="#fff" stroke="#e2571a" stroke-width="1.07"/></svg>
<div class="a hsep" style="left:790px;top:420px;width:18.5px;height:1px;"></div>
<svg class="a" style="left:790.5px;top:427px" width="16" height="16" viewBox="0 0 16 16"><path d="M1.6 14.6L12.6 1.6" stroke="#3a414e" stroke-width="1.03"/><circle cx="12.4" cy="11.6" r="2" fill="#fff" stroke="#222" stroke-width="1.20"/><circle cx="8.2" cy="6.8" r="2" fill="#fff" stroke="#e2571a" stroke-width="1.07"/></svg>
<svg class="a" style="left:790.5px;top:449px" width="16" height="16" viewBox="0 0 16 16"><path d="M2.6 15V7.2C2.6 2 9.8 2 9.8 7.2V15" fill="none" stroke="#a4a4a4" stroke-width="2.76"/><path d="M1.1 12.4H4.1V15H1.1ZM8.3 12.4H11.3V15H8.3Z" fill="#f4f4f4" stroke="#8a8a8a" stroke-width="0.52"/><rect x="12.6" y="11.8" width="2.2" height="2.2" fill="#fff" stroke="#888" stroke-width="0.77"/><path d="M8.2 0.8L14.2 6.8M14.2 0.8L8.2 6.8" stroke="#d8161c" stroke-width="1.75" stroke-dasharray="1.4 0.5"/></svg>
<div class="a hsep" style="left:790px;top:470px;width:18.5px;height:1px;"></div>
<svg class="a" style="left:790.5px;top:477px" width="16" height="16" viewBox="0 0 16 16"><path d="M3 15V7.4C3 2 10.4 2 10.4 7.4V15" fill="none" stroke="#8c1c20" stroke-width="3.31"/><path d="M3 15V7.4C3 2 10.4 2 10.4 7.4V15" fill="none" stroke="#c4585c" stroke-width="1.38"/><path d="M1.2 12.6H4.8V15.2H1.2ZM8.6 12.6H12.2V15.2H8.6Z" fill="#f6f6f6" stroke="#444" stroke-width="0.52"/><rect x="13" y="11.6" width="2.2" height="2.2" fill="#fff" stroke="#222" stroke-width="0.86"/></svg>
<svg class="a" style="left:818.5px;top:117px" width="16" height="16" viewBox="0 0 16 16"><circle cx="4.4" cy="1.6" r="3.2" fill="none" stroke="#3a414e" stroke-width="0.95"/><path d="M10.4 0.2H14L12.2 2.2Z" fill="#111"/><circle cx="9" cy="6.8" r="3.4" fill="#dbeaf6" stroke="#1268c8" stroke-width="1.03"/><circle cx="11.8" cy="9" r="3.4" fill="#dbeaf6" stroke="#1268c8" stroke-width="1.03"/></svg>
<svg class="a" style="left:818.5px;top:139px" width="16" height="16" viewBox="0 0 16 16"><path d="M8 0.4V16" stroke="#111" stroke-width="1.03"/><path d="M6 3.6V13.6H1.4Z" fill="#f2f2f2" stroke="#3a414e" stroke-width="0.95" stroke-linejoin="round"/><path d="M10 3.6V13.6H14.6Z" fill="#bfe0ee" stroke="#1268c8" stroke-width="0.95" stroke-linejoin="round"/></svg>
<svg class="a" style="left:818.5px;top:161px" width="16" height="16" viewBox="0 0 16 16"><path d="M16 14.6H4C0.4 14.6 0 10 3.6 9C5.4 8.6 5.4 7 5.6 5C5.8 2.6 6.8 1.2 8.4 1.2C10 1.2 11 2.6 11.2 5C11.4 7 11.4 8.6 16 8.6" fill="#f4f4f4" stroke="#1e222a" stroke-width="1.29"/><path d="M16 12.3H5C3.4 12.3 3.4 11 5 11H6.4C7.4 11 7.4 10 7.4 8V5.6C7.4 4 9.4 4 9.4 5.6V8C9.4 10.4 10 11 12 11H16" fill="none" stroke="#1268c8" stroke-width="1.12"/></svg>
<svg class="a" style="left:818.5px;top:183px" width="16" height="16" viewBox="0 0 16 16"><rect x="0.8" y="0.8" width="5.8" height="5.8" rx="0.6" fill="url(#gf)" stroke="#3a414e" stroke-width="1.03"/><rect x="9.4" y="0.8" width="5.8" height="5.8" rx="0.6" fill="url(#gb)" stroke="#1268c8" stroke-width="1.03"/><rect x="0.8" y="9.4" width="5.8" height="5.8" rx="0.6" fill="url(#gb)" stroke="#1268c8" stroke-width="1.03"/><path d="M15.2 9.4H9.4V15.2" fill="none" stroke="#1268c8" stroke-width="1.03"/><path d="M10 10H14.6L10 14.6Z" fill="#cfe6f2"/><path d="M16 12.4V16H12.4Z" fill="#111"/></svg>
<svg class="a" style="left:818.5px;top:205px" width="16" height="16" viewBox="0 0 16 16"><path d="M8 2.6V13.4M2.6 8H13.4" stroke="#3a414e" stroke-width="1.56"/><path d="M8 0L10.6 3.4H5.4ZM8 16L10.6 12.6H5.4ZM0 8L3.4 5.4V10.6ZM16 8L12.6 5.4V10.6Z" fill="#3a414e"/><rect x="6.3" y="6.3" width="3.4" height="3.4" fill="#fff" stroke="#3a414e" stroke-width="0.77"/></svg>
<svg class="a" style="left:818.5px;top:227px" width="16" height="16" viewBox="0 0 16 16"><path d="M6.4 2.2A6.6 6.6 0 1 0 12.6 4.4" fill="none" stroke="#3a414e" stroke-width="1.20"/><path d="M5.4 0L10 2.4L5.8 4.8Z" fill="#3a414e"/></svg>
<svg class="a" style="left:818.5px;top:249px" width="16" height="16" viewBox="0 0 16 16"><rect x="0.8" y="0.8" width="14.4" height="14.4" rx="0.6" fill="url(#gb)" stroke="#1268c8" stroke-width="1.12"/><rect x="0.8" y="7.6" width="7.6" height="7.6" rx="0.6" fill="url(#gf)" stroke="#3a414e" stroke-width="1.03"/></svg>
<svg class="a" style="left:818.5px;top:271px" width="16" height="16" viewBox="0 0 16 16"><path d="M8.6 0.8H12.4L15.4 15.2H8.6Z" fill="url(#gb)" stroke="#1268c8" stroke-width="1.03" stroke-linejoin="round"/><path d="M8.8 0.8H0.8V15.2H8.8" fill="url(#gf)" stroke="#3a414e" stroke-width="1.03"/><path d="M4 11.4H10.4" stroke="#111" stroke-width="1.12"/><path d="M12 11.4L8.8 9V13.8Z" fill="#111"/></svg>
<svg class="a" style="left:818.5px;top:293px" width="16" height="16" viewBox="0 0 16 16"><path d="M0.6 8.4H5.6" stroke="#1e222a" stroke-width="1.03"/><path d="M7.6 8.4H15.4" stroke="#1268c8" stroke-width="1.03" stroke-dasharray="1.6 1.1"/><path d="M8.8 1L4 15" stroke="#1268c8" stroke-width="1.12"/></svg>
<svg class="a" style="left:818.5px;top:315px" width="16" height="16" viewBox="0 0 16 16"><path d="M0.6 8.4H5" stroke="#1e222a" stroke-width="1.12"/><path d="M6.2 8.4H11.6" stroke="#1268c8" stroke-width="1.03" stroke-dasharray="1.6 1.1"/><path d="M15.4 2.6L10.4 14.6" stroke="#1268c8" stroke-width="1.12"/></svg>
<svg class="a" style="left:818.5px;top:337px" width="16" height="16" viewBox="0 0 16 16"><path d="M15.2 4H0.8V13.6H15.6" fill="url(#gf)" stroke="#3a414e" stroke-width="1.03"/><rect x="11.4" y="2.4" width="2.8" height="2.8" fill="#1268c8"/></svg>
<svg class="a" style="left:818.5px;top:359px" width="16" height="16" viewBox="0 0 16 16"><path d="M3 4H0.8V14H15.2V4H13" fill="url(#gf)" stroke="#3a414e" stroke-width="1.03"/><rect x="3" y="2.4" width="2.8" height="2.8" fill="#1268c8"/><rect x="10.2" y="2.4" width="2.8" height="2.8" fill="#1268c8"/></svg>
<svg class="a" style="left:818.5px;top:381px" width="16" height="16" viewBox="0 0 16 16"><path d="M1 8H15" stroke="#1e222a" stroke-width="0.95"/><path d="M4.8 5.6L7.8 8L4.8 10.4ZM11.2 5.6L8.2 8L11.2 10.4Z" fill="#1268c8" stroke="#1268c8" stroke-width="0.69"/></svg>
<svg class="a" style="left:818.5px;top:403px" width="16" height="16" viewBox="0 0 16 16"><path d="M8.8 0.8H15.2V15.2H0.8V8.6" fill="url(#gf)" stroke="#3a414e" stroke-width="1.03"/><path d="M0.8 8.6L8.8 0.8" stroke="#1268c8" stroke-width="1.20"/></svg>
<svg class="a" style="left:818.5px;top:425px" width="16" height="16" viewBox="0 0 16 16"><path d="M10.4 0.8H15.2V15.6H0.8V10.4" fill="url(#gf)" stroke="#3a414e" stroke-width="1.03"/><path d="M0.8 10.4C0.8 4.6 5 0.8 10.4 0.8" fill="none" stroke="#1268c8" stroke-width="1.29"/></svg>
<svg class="a" style="left:818.5px;top:447px" width="16" height="16" viewBox="0 0 16 16"><path d="M2.2 8.2C3.4 3.6 6.4 3.2 8.2 6.2C10 9.2 12.6 9.6 14.4 6.4" fill="none" stroke="#1268c8" stroke-width="1.12"/><path d="M1.4 9.4L0.6 14.4M14.6 5.4L15.4 0.6" stroke="#3a414e" stroke-width="0.95"/><rect x="0.9" y="7.4" width="2" height="2" fill="#fff" stroke="#3a414e" stroke-width="0.77"/><rect x="13.4" y="5.2" width="2" height="2" fill="#fff" stroke="#3a414e" stroke-width="0.77"/></svg>
<svg class="a" style="left:818.5px;top:469px" width="16" height="16" viewBox="0 0 16 16"><path d="M0.8 8L3.6 5.4H15.2V10.6L12.4 13.4H0.8Z" fill="#eaf3f9" stroke="#1268c8" stroke-width="0.95" stroke-linejoin="round"/><path d="M4 8.4L6.8 5.6V2.6H12.6L9.8 5.4" fill="#d4e8f4" stroke="#1268c8" stroke-width="0.86"/><rect x="4" y="7.4" width="5.8" height="6" fill="#b9dcee" stroke="#1268c8" stroke-width="0.95"/><path d="M9.8 7.4L12.6 4.6V10.4L9.8 13.4M0.8 8V13.4M12.4 13.4V8L15.2 5.4" fill="none" stroke="#1268c8" stroke-width="0.86"/></svg>
<svg class="a" style="left:818.5px;top:501px" width="16" height="16" viewBox="0 0 16 16"><rect x="5.6" y="9.6" width="9.8" height="5.8" rx="0.5" fill="url(#gf)" stroke="#3a414e" stroke-width="0.90"/><rect x="3.2" y="4.6" width="8.6" height="6.2" rx="0.5" fill="url(#gd)" stroke="#3a414e" stroke-width="0.90"/><rect x="0.8" y="0.8" width="9.8" height="5.2" rx="0.5" fill="url(#gf)" stroke="#3a414e" stroke-width="0.90"/></svg>
<svg class="a" style="left:818.5px;top:523px" width="16" height="16" viewBox="0 0 16 16"><rect x="3.4" y="5" width="8.6" height="6.2" rx="0.5" fill="url(#gd)" stroke="#3a414e" stroke-width="0.90"/><rect x="0.8" y="0.8" width="9.8" height="5.6" rx="0.5" fill="url(#gf)" stroke="#3a414e" stroke-width="0.90"/><rect x="5.6" y="9.6" width="9.8" height="5.8" rx="0.5" fill="url(#gf)" stroke="#3a414e" stroke-width="0.90"/></svg>
<svg class="a" style="left:818.5px;top:545px" width="16" height="16" viewBox="0 0 16 16"><rect x="0.8" y="1.4" width="10.8" height="7" rx="0.5" fill="url(#gf)" stroke="#3a414e" stroke-width="0.90"/><rect x="4.4" y="6.2" width="10.8" height="7.4" rx="0.5" fill="url(#gd)" stroke="#3a414e" stroke-width="0.90"/></svg>
<svg class="a" style="left:818.5px;top:567px" width="16" height="16" viewBox="0 0 16 16"><rect x="4.4" y="6.2" width="10.8" height="7.4" rx="0.5" fill="url(#gd)" stroke="#3a414e" stroke-width="0.90"/><rect x="0.8" y="1" width="10.8" height="7.4" rx="0.5" fill="url(#gf)" stroke="#3a414e" stroke-width="0.90"/></svg>
<div class="a hsep" style="left:818px;top:587.5px;width:18.5px;height:1px;"></div>
<svg class="a" style="left:818.5px;top:595px" width="16" height="16" viewBox="0 0 16 16"><path d="M9.4 4.4H13.4V11.6H3V7.4" fill="#eceef2" stroke="#3a414e" stroke-width="0.95"/><text x="0.2" y="6.6" font-family="Liberation Mono,monospace" font-weight="bold" font-size="6.6" letter-spacing="-0.4" fill="#111">ABC</text><path d="M16 12.4V16H12.4Z" fill="#111"/></svg>
<svg class="a" style="left:818.5px;top:617px" width="16" height="16" viewBox="0 0 16 16"><rect x="0.8" y="0.8" width="10.8" height="7.4" rx="0.5" fill="url(#gd)" stroke="#3a414e" stroke-width="0.90"/><path d="M5.4 14.8H15.8M14.6 4.6V15.6M6.2 13.6V15.8M13.4 5.4H15.6" stroke="#3a414e" stroke-width="0.77"/><path d="M8 14.6L14.4 8.8" stroke="#777" stroke-width="0.69" stroke-dasharray="1.2 1"/><path d="M14.6 3.8L13.4 6H15.8Z" fill="#3a414e"/></svg>
<div class="a " style="left:814px;top:89px;width:28px;height:32px;background:radial-gradient(ellipse at 50% 45%,#ffffff 0%,#f4f4f4 45%,#b4b8b8 100%);border:3px solid #fe0000;box-sizing:border-box"></div>
<svg class="a" style="left:820px;top:96px" width="16" height="16" viewBox="0 0 16 16"><path d="M0.6 14.4h3.2M6.2 14.4h9.2" stroke="#333" stroke-width="1.1"/><path d="M9.43 8.54 L16.10 2.20 L14.30 0.20 L7.29 6.16 Z" fill="#7a5426"/><path d="M8.99 8.05 L15.73 1.80 L14.80 0.75 L7.89 6.83 Z" fill="#c9a774"/><path d="M7.97 10.25 L9.79 8.48 L7.39 5.80 L5.43 7.42 Z" fill="#f6f6f6" stroke="#666" stroke-width="0.4"/><path d="M3.71 12.60 Q5.72 13.48 8.23 10.29 L5.42 7.16 Q2.94 8.45 3.71 12.60 Z" fill="#cf5514" stroke="#8a3408" stroke-width="0.5"/></svg>
<svg class="a" style="left:600px;top:95px" width="125" height="165" viewBox="600 95 125 165"><circle cx="661.7" cy="158" r="47.6" fill="none" stroke="#3e454f" stroke-width="10.8"/><rect x="639" y="135" width="46" height="46" fill="#b1b3b6"/><rect x="648" y="144" width="28" height="28" fill="#a2a9b2"/><g font-family="Liberation Serif,Noto Serif CJK SC,serif" font-size="16" font-weight="400" fill="#c3c5c8" text-anchor="middle"><text x="661.7" y="115.3">北</text><text x="661.7" y="214">南</text><text x="612.5" y="164.6">西</text><text x="711" y="164.6">东</text><text x="664.5" y="166.2" fill="#4c525c" font-size="22" font-weight="300">上</text></g><rect x="638.3" y="235.8" width="47.2" height="16" rx="4" fill="#9b9eab" stroke="#8b8e9c" stroke-width="1"/><text x="642.6" y="247.8" font-family="Liberation Sans,sans-serif" font-size="10.6" fill="#6b6e7a">WCS</text><path d="M671.8 241.2h9l-4.5 5z" fill="#c0c2cc" stroke="#8e919e" stroke-width="0.6"/></svg>
<svg class="a" style="left:0;top:240px" width="230" height="240" viewBox="0 240 230 240"><path d="M120.0 265.4C123.7 264.4 127.2 262.7 131.5 262.2C135.8 261.7 141.7 261.9 145.5 262.6C149.3 263.3 151.3 264.6 154.2 266.6C157.1 268.6 160.3 271.3 162.9 274.5C165.5 277.7 168.0 282.0 169.9 285.8C171.8 289.6 173.1 293.6 174.3 297.2C175.5 300.8 176.2 302.7 176.9 307.7C177.6 312.7 177.7 320.7 178.3 327.0C178.9 333.3 178.9 341.1 180.4 345.3C181.9 349.5 185.7 348.9 187.4 352.0C189.2 355.1 189.9 359.4 190.9 364.0C191.9 368.6 192.8 373.6 193.5 379.7C194.2 385.8 195.4 393.7 195.3 400.7C195.2 407.7 193.9 415.9 192.7 421.7C191.5 427.5 190.2 431.8 188.3 435.7C186.4 439.6 184.4 442.7 181.3 445.3C178.2 447.9 173.6 449.6 169.9 451.4C166.2 453.2 163.5 454.9 159.4 456.3C155.3 457.7 149.6 459.1 145.5 459.8C141.4 460.5 139.2 460.6 135.0 460.7C130.8 460.8 123.7 460.7 120.0 460.5C116.3 460.3 116.5 460.5 112.7 459.3C108.9 458.1 102.3 455.9 96.9 453.1C91.5 450.3 85.4 446.6 80.3 442.7C75.2 438.8 70.5 434.6 66.3 429.5C62.1 424.4 58.4 418.4 55.0 412.0C51.6 405.6 48.4 396.7 46.2 391.0C44.0 385.3 43.4 382.5 41.9 378.0C40.4 373.5 38.9 368.9 37.5 364.0C36.1 359.1 34.8 355.3 33.6 348.8C32.4 342.3 29.9 331.9 30.1 325.2C30.3 318.5 32.9 313.3 34.9 308.6C36.9 303.9 39.1 300.2 41.9 296.9C44.7 293.5 46.9 291.2 51.5 288.5C56.1 285.8 63.4 282.9 69.8 280.6C76.2 278.3 83.4 276.5 90.0 274.5C96.6 272.5 104.2 269.9 109.2 268.4C114.2 266.9 116.3 266.4 120.0 265.4Z" fill="none" stroke="#ffffff" stroke-width="1.1"/><path d="M109.2 268.4L110.0 295.0M90.0 274.5L95.5 297.2M69.8 280.6L83.3 308.6M50.6 289.9L73.3 315.6M36.6 306.8L63.7 326.0M30.1 327.0L56.7 339.2M34.9 348.8L53.2 351.4M38.4 365.4L46.2 365.4M131.1 262.6L124.5 297.6M153.8 266.6L136.7 305.6M169.6 285.8L149.8 312.6M176.9 307.7L159.4 322.0M178.1 327.0L165.6 332.5M180.4 345.3L171.7 347.0M189.2 360.5L178.7 360.5M42.4 380.6L54.0 379.7M48.0 396.9L59.9 391.6M55.5 412.6L67.2 402.4M66.3 428.3L78.6 411.2M80.8 442.3L90.8 417.3M112.7 459.3L112.7 427.0M192.7 378.0L171.7 374.5M195.3 400.7L167.3 387.6M192.7 422.6L160.3 399.0M181.3 445.3L151.6 408.6M159.4 456.3L138.5 416.4M135.8 460.7L126.2 420.0" fill="none" stroke="#ffffff" stroke-width="1.1"/><circle cx="112.4" cy="361.4" r="61" fill="none" stroke="#ffffff" stroke-width="1.25" stroke-dasharray="3.2 2.9"/><rect x="107.4" y="295.3" width="10" height="10" fill="url(#gg)" stroke="#5a6068" stroke-width="1"/><rect x="46.6" y="356.4" width="10" height="10" fill="url(#gg)" stroke="#5a6068" stroke-width="1"/><rect x="107.4" y="356.4" width="10" height="10" fill="url(#gg)" stroke="#5a6068" stroke-width="1"/><rect x="168.3" y="356.4" width="10" height="10" fill="url(#gg)" stroke="#5a6068" stroke-width="1"/><rect x="107.4" y="417.7" width="10" height="10" fill="url(#gg)" stroke="#5a6068" stroke-width="1"/></svg>
<div class="a " style="left:182.5px;top:148.5px;width:332.5px;height:198.7px;background:#3d3d3d"></div><div class="a " style="left:198px;top:148.5px;width:300px;height:198.7px;background:#ebebeb"></div><svg class="a" style="left:182px;top:148px" width="16" height="34" viewBox="182 148 16 34"><rect x="186.3" y="152.3" width="1.6" height="1.6" fill="#c8c8c8"/><rect x="186.3" y="155.2" width="1.6" height="1.6" fill="#c8c8c8"/><rect x="186.3" y="158.1" width="1.6" height="1.6" fill="#c8c8c8"/><rect x="186.3" y="161" width="1.6" height="1.6" fill="#c8c8c8"/><rect x="186.3" y="163.9" width="1.6" height="1.6" fill="#c8c8c8"/><rect x="186.3" y="166.8" width="1.6" height="1.6" fill="#c8c8c8"/><rect x="186.3" y="169.7" width="1.6" height="1.6" fill="#c8c8c8"/><rect x="186.3" y="172.6" width="1.6" height="1.6" fill="#c8c8c8"/><rect x="186.3" y="175.5" width="1.6" height="1.6" fill="#c8c8c8"/><rect x="189.2" y="152.3" width="1.6" height="1.6" fill="#c8c8c8"/><rect x="189.2" y="155.2" width="1.6" height="1.6" fill="#c8c8c8"/><rect x="189.2" y="158.1" width="1.6" height="1.6" fill="#c8c8c8"/><rect x="189.2" y="161" width="1.6" height="1.6" fill="#c8c8c8"/><rect x="189.2" y="163.9" width="1.6" height="1.6" fill="#c8c8c8"/><rect x="189.2" y="166.8" width="1.6" height="1.6" fill="#c8c8c8"/><rect x="189.2" y="169.7" width="1.6" height="1.6" fill="#c8c8c8"/><rect x="189.2" y="172.6" width="1.6" height="1.6" fill="#c8c8c8"/><rect x="189.2" y="175.5" width="1.6" height="1.6" fill="#c8c8c8"/><rect x="192.1" y="152.3" width="1.6" height="1.6" fill="#c8c8c8"/><rect x="192.1" y="155.2" width="1.6" height="1.6" fill="#c8c8c8"/><rect x="192.1" y="158.1" width="1.6" height="1.6" fill="#c8c8c8"/><rect x="192.1" y="161" width="1.6" height="1.6" fill="#c8c8c8"/><rect x="192.1" y="163.9" width="1.6" height="1.6" fill="#c8c8c8"/><rect x="192.1" y="166.8" width="1.6" height="1.6" fill="#c8c8c8"/><rect x="192.1" y="169.7" width="1.6" height="1.6" fill="#c8c8c8"/><rect x="192.1" y="172.6" width="1.6" height="1.6" fill="#c8c8c8"/><rect x="192.1" y="175.5" width="1.6" height="1.6" fill="#c8c8c8"/></svg><div class="a combo" style="left:198px;top:150px;width:270px;height:24.5px;"><div class="a lab" style="left:4px;top:4.8px;font-size:11.5px">圆</div></div><div class="a cbtn" style="left:451px;top:152.5px;width:15px;height:19.5px;"><svg class="a" style="left:2.5px;top:5.25px" width="9" height="7" viewBox="0 0 9 7"><path d="M0.6 1.1l3.9 4 3.9-4" fill="none" stroke="#425a8c" stroke-width="2.1"/></svg></div><div class="a " style="left:473.5px;top:150px;width:23.5px;height:23.7px;background:linear-gradient(#ffffff,#fbfaf6 50%,#ece8d8);border:1.7px solid #1f4686;border-radius:3.5px;box-sizing:border-box"><svg class="a" style="left:2.2px;top:2.2px" width="16" height="16" viewBox="0 0 16 16"><rect x="1.2" y="1.6" width="11.6" height="9.4" rx="1" fill="#f4f4f4" stroke="#33363c" stroke-width="1.3"/><rect x="3.2" y="3.6" width="3.4" height="2.2" fill="#7d8490"/><rect x="7" y="3.6" width="4" height="2.2" fill="#fff" stroke="#7d8490" stroke-width="0.5"/><rect x="3.2" y="6.6" width="3.4" height="2.2" fill="#7d8490"/><rect x="8.2" y="8.4" width="7.8" height="7.8" rx="0.8" fill="#fff" stroke="#33363c" stroke-width="1.2"/><path d="M10 12.4l1.8 1.8 2.8-3.8" fill="none" stroke="#333" stroke-width="0.9"/></svg></div><svg class="a" style="left:500px;top:150px" width="14" height="26" viewBox="500 150 14 26"><path d="M504 154l6.8 6.7M510.8 154l-6.8 6.7" stroke="#fff" stroke-width="2" fill="none"/><path d="M503.8 166.3h7M503.8 168.8h7M503.8 171.3h4" stroke="#e8e8e8" stroke-width="1.1"/><path d="M508.5 171h3l-1.5 1.6z" fill="#e8e8e8"/></svg><div class="a " style="left:198px;top:180.7px;width:299px;height:163px;background:#fff;border:1px solid #848484;box-sizing:border-box"></div><div class="a " style="left:199px;top:181.7px;width:112px;height:161px;background:#f0f0f0"></div><div class="a " style="left:311px;top:180.7px;width:1px;height:163px;background:#848484"></div><div class="a lab" style="left:203px;top:182.7px">颜色</div><div class="a " style="left:198px;top:198.7px;width:299px;height:1px;background:#848484"></div><div class="a lab" style="left:203px;top:200.7px">图层</div><div class="a mono" style="left:313.3px;top:203px;letter-spacing:-0.12px">0</div><div class="a " style="left:198px;top:216.7px;width:299px;height:1px;background:#848484"></div><div class="a lab" style="left:203px;top:218.7px">线型</div><div class="a " style="left:198px;top:234.7px;width:299px;height:1px;background:#848484"></div><div class="a lab" style="left:203px;top:236.7px">圆心 X 坐标</div><div class="a mono" style="left:313.3px;top:240px;letter-spacing:0.27px">2139.867</div><div class="a " style="left:198px;top:252.7px;width:299px;height:1px;background:#848484"></div><div class="a lab" style="left:203px;top:254.7px">圆心 Y 坐标</div><div class="a mono" style="left:313.3px;top:258px;letter-spacing:0.27px">519.3283</div><div class="a " style="left:198px;top:270.7px;width:299px;height:1px;background:#848484"></div><div class="a lab" style="left:203px;top:272.7px">半径</div><div class="a mono" style="left:313.3px;top:276px;letter-spacing:0.39px">1.0718</div><div class="a " style="left:198px;top:288.7px;width:299px;height:1px;background:#848484"></div><div class="a lab" style="left:203px;top:290.7px">直径</div><div class="a mono" style="left:313.3px;top:294px;letter-spacing:0.39px">2.1435</div><div class="a " style="left:198px;top:306.7px;width:299px;height:1px;background:#848484"></div><div class="a lab" style="left:203px;top:308.7px">周长</div><div class="a mono" style="left:313.3px;top:312px;letter-spacing:0.39px">6.7341</div><div class="a " style="left:198px;top:324.7px;width:299px;height:1px;background:#848484"></div><div class="a lab" style="left:203px;top:326.7px">面积</div><div class="a mono" style="left:313.3px;top:330px;letter-spacing:0.39px">3.6087</div><div class="a" style="left:315px;top:185px;width:8px;height:8px;border:1px solid #000;background:#fff"></div><div class="a song" style="left:331px;top:184.3px">ByLayer</div><div class="a " style="left:316.5px;top:226px;width:60px;height:1px;background:#000"></div><div class="a song" style="left:382px;top:220.7px">ByLayer</div>
<div class="a " style="left:42px;top:298.3px;width:140px;height:137px;border:3.5px solid #fb0007;box-sizing:border-box;filter:drop-shadow(1px 2px 1.6px rgba(0,0,0,0.5))"></div>
<svg class="a" style="left:0;top:0" width="843" height="687" viewBox="0 0 843 687"><defs><filter id="sh" x="-5%" y="-5%" width="110%" height="120%"><feGaussianBlur stdDeviation="1.6"/></filter></defs><polygon points="184.2,352.5 790.4,116.6 787.9,122.6 810.2,106.9 784.6,108.8 789.0,113.2 182.8,349.1" fill="#000" opacity="0.35" transform="translate(1.5,3)" filter="url(#sh)"/><polygon points="184.2,352.5 790.4,116.6 787.9,122.6 810.2,106.9 784.6,108.8 789.0,113.2 182.8,349.1" fill="#fb0007"/></svg>
</body></html>
